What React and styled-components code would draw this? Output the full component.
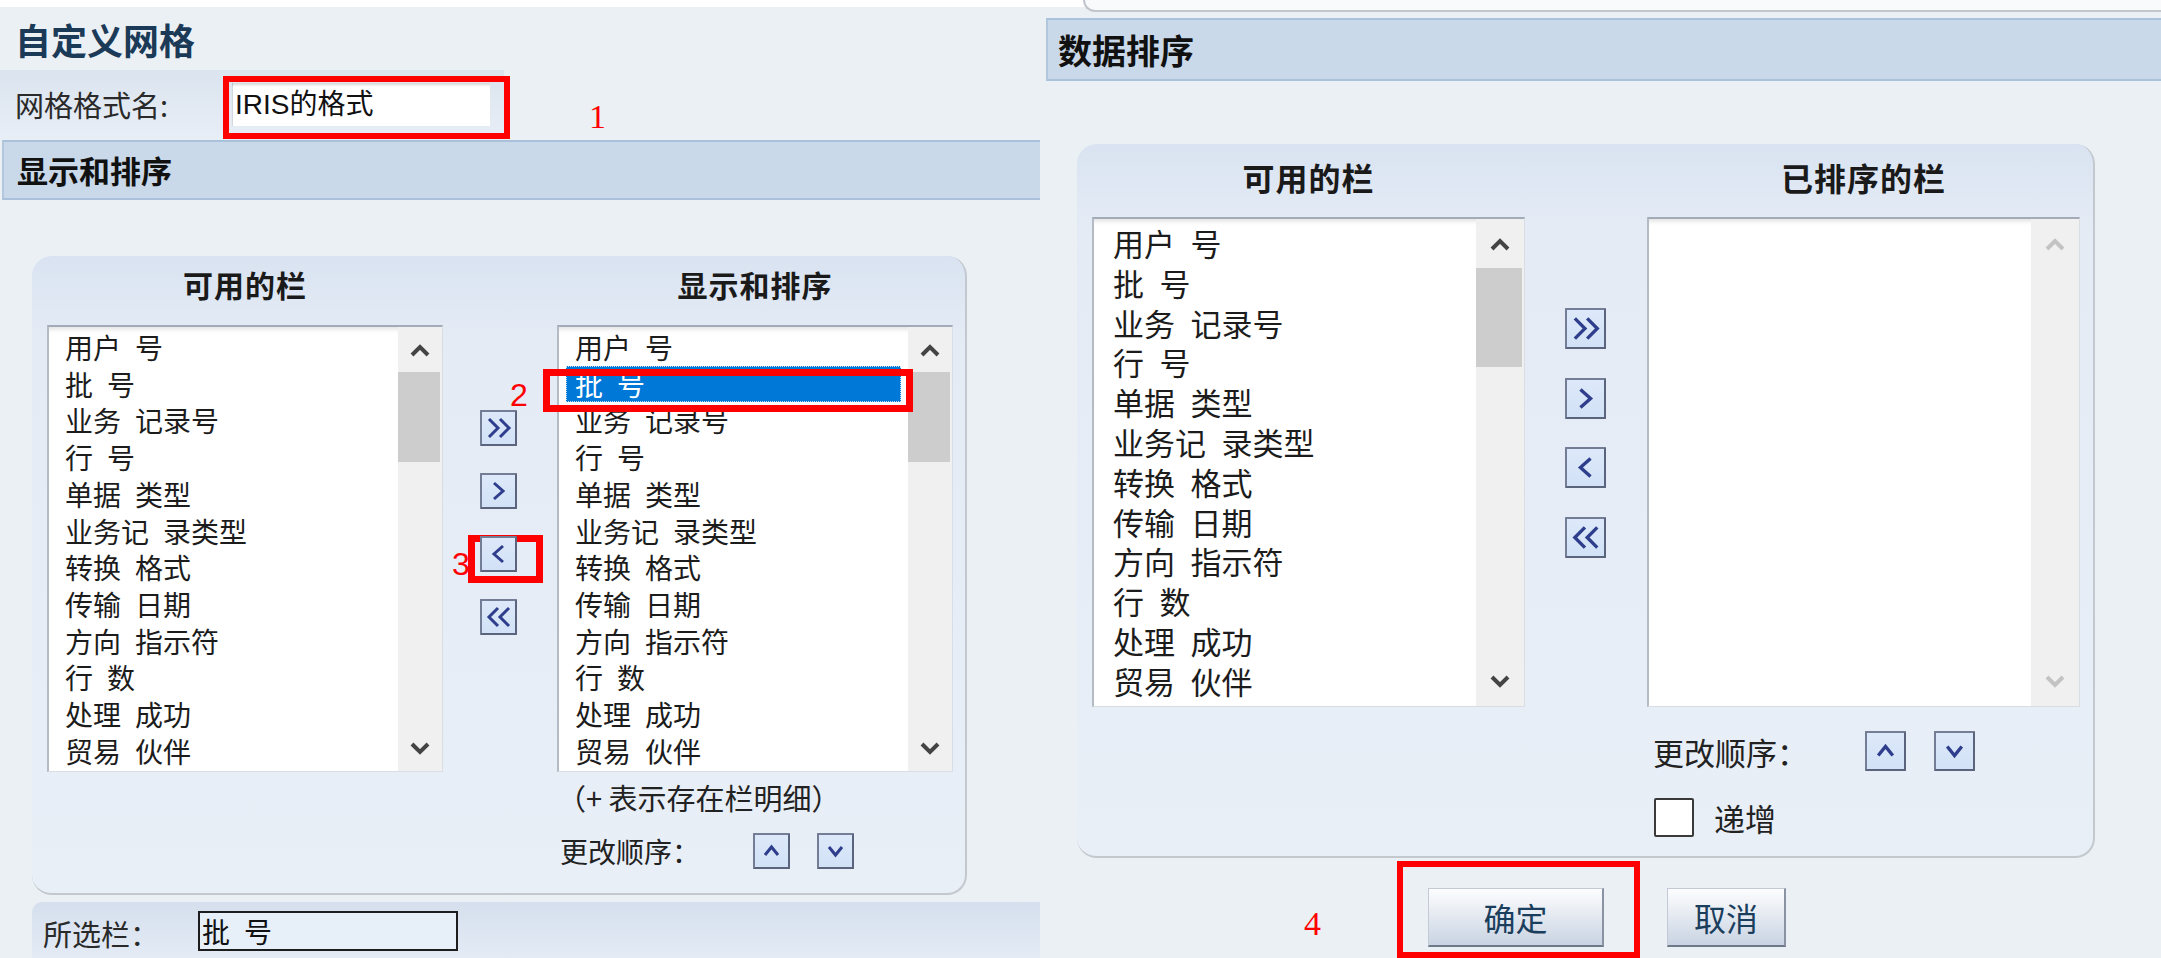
import React from 'react';
import styled, { createGlobalStyle, css } from 'styled-components';

const CJK = '"Noto Sans CJK SC", "Noto Sans CJK JP", sans-serif';
const MIXED = '"Liberation Sans", "Noto Sans CJK SC", sans-serif';

const GlobalStyle = createGlobalStyle`
  *, *::before, *::after { box-sizing: border-box; }
  html, body { margin: 0; padding: 0; background: #ebf0f5; }
  body { font-family: ${CJK}; color: #222; }
`;

const ITEMS = ['用户 号', '批 号', '业务 记录号', '行 号', '单据 类型', '业务记 录类型', '转换 格式', '传输 日期', '方向 指示符', '行 数', '处理 成功', '贸易 伙伴'];

const SIZES = {
  sm: { w: 396, h: 447, fs: 28, lh: 36.7, pt: 2, pl: 9, sb: 44, thumb: 90 },
  lg: { w: 433, h: 490, fs: 31, lh: 39.8, pt: 4, pl: 12, sb: 48, thumb: 99 },
};

/* ---------- page frame ---------- */
const Page = styled.div`
  display: flex;
  width: 2161px;
  height: 958px;
  overflow: hidden;
  background: #ebf0f5;
`;

const Pane = styled.section`
  display: flex;
  flex-direction: column;
  flex: none;
  width: ${p => p.$w}px;
  height: 100%;
`;

const WhiteStrip = styled.div`
  flex: none;
  height: 7px;
  background: #fff;
`;

const Title = styled.h1`
  margin: 0;
  flex: none;
  height: 63px;
  padding: 6px 0 0 15px;
  font-size: 36px;
  line-height: 52px;
  font-weight: 700;
  color: #1b3a57;
`;

const FormatRow = styled.div`
  flex: none;
  display: flex;
  align-items: flex-start;
  height: 70px;
  background: linear-gradient(180deg, #dbe4ef, #e8eef6) no-repeat;
  background-size: 504px 100%;
`;

const FieldLabel = styled.span`
  flex: none;
  width: ${p => p.$w}px;
  padding-left: ${p => p.$pl}px;
  font-size: 29px;
  line-height: ${p => p.$lh}px;
  color: #2a2a2a;
`;

const RedFrame = styled.div`
  flex: none;
  border: ${p => p.$t || 6}px solid #ff0000;
`;

const NameFrame = styled(RedFrame)`
  margin-top: 6px;
  padding: 1px 14px 7px 3px;
`;

const TextBox = styled.div`
  width: 258px;
  height: 43px;
  background: #fff;
  box-shadow: inset 0 4px 3px -2px rgba(0, 0, 0, 0.16), inset 1px 0 0 #d3d9e1;
  font-family: ${MIXED};
  font-size: 28px;
  line-height: 43px;
  padding-left: 3px;
  color: #111;
  white-space: nowrap;
`;

const Mark = styled.span`
  flex: none;
  font-family: ${p => (p.$serif ? '"Liberation Serif", serif' : '"Liberation Sans", sans-serif')};
  color: #ff0000;
  font-size: ${p => p.$size || 34}px;
  line-height: 1;
`;

const Mark1 = styled(Mark)`
  margin: 30px 0 0 79px;
`;

/* red numbers and frames laid over the dialog (annotations) */
const FloatMark = styled(Mark)`
  position: absolute;
  left: ${p => p.$x}px;
  top: ${p => p.$y}px;
  z-index: 3;
  pointer-events: none;
`;

const FloatFrame = styled.div`
  position: absolute;
  left: ${p => p.$x}px;
  top: ${p => p.$y}px;
  width: ${p => p.$w}px;
  height: ${p => p.$h}px;
  border: 7px solid #ff0000;
  z-index: ${p => p.$z};
  pointer-events: none;
`;

const SectionHeader = styled.div`
  flex: none;
  height: ${p => p.$h}px;
  margin-left: ${p => p.$ml}px;
  background: #c9d9e9;
  border-top: 2px solid #a9c1da;
  border-bottom: 2px solid #a9c1da;
  border-left: 2px solid #b3c7dc;
  padding-left: ${p => p.$pl}px;
  font-size: ${p => p.$fs}px;
  line-height: ${p => p.$h - 4}px;
  font-weight: 700;
  color: #111;
`;

/* ---------- rounded dialog panel ---------- */
const Panel = styled.div`
  flex: none;
  display: flex;
  flex-direction: column;
  width: ${p => p.$w}px;
  height: ${p => p.$h}px;
  margin: ${p => p.$mt}px 0 0 ${p => p.$ml}px;
  padding-left: 15px;
  border-radius: 20px;
  background: linear-gradient(180deg, #d9e3f1 0px, #e4ebf5 80px, #e9eff7 100%);
  border-right: 2px solid #c3c8ce;
  border-bottom: 2px solid #c3c8ce;
`;

const HeadRow = styled.div`
  display: grid;
  grid-template-columns: ${p => p.$cols};
  height: ${p => p.$h}px;
  padding-top: ${p => p.$pt}px;
`;

const ColHead = styled.div`
  text-align: center;
  font-size: ${p => p.$fs}px;
  line-height: 40px;
  font-weight: 700;
  letter-spacing: 1px;
  color: #1a1a1a;
`;

const Body = styled.div`
  position: relative;
  display: flex;
  align-items: flex-start;
`;

const Column = styled.div`
  display: flex;
  flex-direction: column;
`;

const ButtonCol = styled.div`
  flex: none;
  display: flex;
  flex-direction: column;
  width: ${p => p.$w}px;
  padding-left: ${p => p.$pl}px;
  padding-top: ${p => p.$pt}px;
  gap: ${p => p.$gap}px;
`;

const IconButton = styled.button`
  position: relative;
  z-index: 1;
  flex: none;
  width: ${p => p.$w}px;
  height: ${p => p.$h}px;
  padding: 0;
  margin: 0;
  display: flex;
  align-items: center;
  justify-content: center;
  background: linear-gradient(180deg, #dde9fa, #d2e1f6);
  border: 2px solid #737e96;
  border-right-color: #5a647c;
  border-bottom-color: #5a647c;
  border-radius: 1px;
  cursor: pointer;
  svg { display: block; width: 100%; height: 100%; }
`;

/* ---------- list box ---------- */
const ListFrame = styled.div`
  flex: none;
  display: flex;
  width: ${p => p.$w}px;
  height: ${p => p.$h}px;
  background: #fff;
  border-top: 2px solid #a2abb7;
  border-left: 2px solid #b3bbc5;
  border-right: 1px solid #d9dee4;
  border-bottom: 1px solid #d9dee4;
  overflow: hidden;
`;

const ListItems = styled.div`
  flex: 1;
  min-width: 0;
  padding-top: ${p => p.$pt}px;
  box-shadow: inset 0 6px 5px -4px rgba(0, 0, 0, 0.13);
  font-size: ${p => p.$fs}px;
  line-height: ${p => p.$lh}px;
  word-spacing: 0.28em;
  color: #1c1c1c;
  overflow: hidden;
`;

const Item = styled.div`
  margin: 0 7px;
  padding-left: ${p => p.$pl}px;
  white-space: nowrap;
  ${p => p.$selected && css`
    background: #0078d7;
    color: #fff;
    outline: 1px dotted #bfe0ff;
    outline-offset: -1px;
  `}
`;

const Track = styled.div`
  flex: none;
  display: flex;
  flex-direction: column;
  width: ${p => p.$w}px;
  background: #f0f0f0;
`;

const ArrowCell = styled.div`
  flex: none;
  height: ${p => p.$h}px;
  display: flex;
  align-items: center;
  justify-content: center;
`;

const Thumb = styled.div`
  flex: none;
  height: ${p => p.$h}px;
  margin-right: 2px;
  background: #cdcdcd;
`;

const TrackFill = styled.div`
  flex: 1;
`;

const ScrollChevron = ({ dir, muted }) => (
  <svg width="22" height="14" viewBox="0 0 22 14">
    <polyline
      points={dir === 'up' ? '3,12 11,4 19,12' : '3,2 11,10 19,2'}
      fill="none"
      stroke={muted ? '#c3c3c3' : '#444'}
      strokeWidth="4"
    />
  </svg>
);

function ListBox({ size, items = [], selected = -1, showThumb, muted }) {
  const s = SIZES[size];
  return (
    <ListFrame $w={s.w} $h={s.h}>
      <ListItems $fs={s.fs} $lh={s.lh} $pt={s.pt}>
        {items.map((t, i) => (
          <Item key={t} $pl={s.pl} $selected={i === selected}>{t}</Item>
        ))}
      </ListItems>
      <Track $w={s.sb}>
        <ArrowCell $h={s.sb + 1}><ScrollChevron dir="up" muted={muted} /></ArrowCell>
        {showThumb && <Thumb $h={s.thumb} />}
        <TrackFill />
        <ArrowCell $h={s.sb}><ScrollChevron dir="down" muted={muted} /></ArrowCell>
      </Track>
    </ListFrame>
  );
}

const MOVE_PATHS = {
  allRight: ['7,7 16,16 7,25', '18,7 27,16 18,25'],
  right: ['12,8 21,16 12,24'],
  left: ['21,8 12,16 21,24'],
  allLeft: ['16,7 7,16 16,25', '27,7 18,16 27,25'],
  up: ['10,20 16.5,12 23,20'],
  down: ['10,12 16.5,20 23,12'],
};

const ChevronIcon = ({ kind }) => (
  <svg viewBox="0 0 33 32">
    {MOVE_PATHS[kind].map(pts => (
      <polyline key={pts} points={pts} fill="none" stroke="#2f3e8c" strokeWidth="3" />
    ))}
  </svg>
);

function MoveButtons({ w, pl, pt, gap, bw, bh }) {
  return (
    <ButtonCol $w={w} $pl={pl} $pt={pt} $gap={gap}>
      {['allRight', 'right', 'left', 'allLeft'].map(k => (
        <IconButton key={k} $w={bw} $h={bh} aria-label={k}><ChevronIcon kind={k} /></IconButton>
      ))}
    </ButtonCol>
  );
}

const Note = styled.div`
  margin-top: 7px;
  font-size: 29px;
  line-height: 36px;
  color: #222;
  white-space: nowrap;
`;

const OrderRow = styled.div`
  display: flex;
  align-items: center;
  margin-top: ${p => p.$mt}px;
  height: ${p => p.$h}px;
  padding-left: ${p => p.$pl}px;
  gap: ${p => p.$gap}px;
`;

const OrderLabel = styled.span`
  flex: none;
  width: ${p => p.$w}px;
  font-size: ${p => p.$fs}px;
  color: #222;
  white-space: nowrap;
`;

const CheckRow = styled.label`
  display: flex;
  align-items: center;
  gap: 20px;
  margin-top: 27px;
  height: 39px;
  padding-left: 7px;
  font-size: 31px;
  color: #222;
`;

const CheckBox = styled.span`
  flex: none;
  width: 40px;
  height: 39px;
  background: #fff;
  border: 2px solid #3a3a3a;
  border-radius: 2px;
`;

const SelectedBar = styled.div`
  flex: 1;
  display: flex;
  align-items: flex-start;
  margin: 7px 0 0 32px;
  background: linear-gradient(180deg, #d5dfed, #e5ecf6);
  border-top-left-radius: 10px;
`;

const SelInput = styled.div`
  flex: none;
  margin-top: 9px;
  width: 260px;
  height: 40px;
  background: #e7eff9;
  border: 2px solid #1d1d1d;
  font-size: 28px;
  line-height: 36px;
  padding-left: 2px;
  word-spacing: 0.28em;
  color: #111;
`;

/* ---------- right dialog ---------- */
const TopArea = styled.div`
  flex: none;
  height: 18px;
  background: linear-gradient(180deg, #fff 0 7px, transparent 7px);
`;

const PrevPanelEdge = styled.div`
  height: 12px;
  margin-left: 43px;
  background: #f8fafc;
  border-left: 2px solid #c2c6cc;
  border-bottom: 2px solid #c2c6cc;
  border-bottom-left-radius: 14px;
`;

const Footer = styled.div`
  flex: none;
  display: flex;
  align-items: flex-start;
  margin-top: 3px;
  padding-left: 264px;
`;

const Mark4 = styled(Mark)`
  margin-top: 46px;
`;

const OkFrame = styled(RedFrame)`
  margin-left: 76px;
  padding: 21px 30px 5px 25px;
`;

const DialogButton = styled.button`
  flex: none;
  width: ${p => p.$w}px;
  height: 59px;
  margin: ${p => p.$m || 0};
  padding: 0;
  background: linear-gradient(180deg, #fdfdfe 0%, #e6ebf2 45%, #c9d3e2 100%);
  border: 1px solid #c3cad5;
  border-right: 2px solid #8a93a2;
  border-bottom: 2px solid #6f7888;
  font-family: ${CJK};
  font-size: 32px;
  color: #1b3e5d;
  cursor: pointer;
`;

export default function App() {
  return (
    <>
      <GlobalStyle />
      <Page>
        <Pane $w={1040}>
          <WhiteStrip />
          <Title>自定义网格</Title>
          <FormatRow>
            <FieldLabel $w={223} $pl={15} $lh={68}>网格格式名:</FieldLabel>
            <NameFrame>
              <TextBox>IRIS的格式</TextBox>
            </NameFrame>
            <Mark1 $serif $size={34}>1</Mark1>
          </FormatRow>
          <SectionHeader $h={60} $ml={2} $pl={13} $fs={31}>显示和排序</SectionHeader>

          <Panel $w={935} $h={639} $mt={56} $ml={32}>
            <HeadRow $cols="396px 114px 396px" $h={69} $pt={8}>
              <ColHead $fs={30}>可用的栏</ColHead>
              <span />
              <ColHead $fs={30}>显示和排序</ColHead>
            </HeadRow>
            <Body>
              <ListBox size="sm" items={ITEMS} showThumb />
              <MoveButtons w={114} pl={37} pt={85} gap={27} bw={37} bh={36} />
              <Column>
                <ListBox size="sm" items={ITEMS} selected={1} showThumb />
                <Note>（+ 表示存在栏明细）</Note>
                <OrderRow $mt={18} $h={36} $pl={3} $gap={27}>
                  <OrderLabel $w={166} $fs={28}>更改顺序：</OrderLabel>
                  <IconButton $w={37} $h={36} aria-label="up"><ChevronIcon kind="up" /></IconButton>
                  <IconButton $w={37} $h={36} aria-label="down"><ChevronIcon kind="down" /></IconButton>
                </OrderRow>
              </Column>

              <FloatFrame $x={496} $y={44} $w={370} $h={43} $z={2} />
              <FloatMark $x={463} $y={54} $size={32}>2</FloatMark>
              <FloatFrame $x={421} $y={210} $w={75} $h={48} $z={0} />
              <FloatMark $x={405} $y={223} $size={32}>3</FloatMark>
            </Body>
          </Panel>

          <SelectedBar>
            <FieldLabel $w={166} $pl={11} $lh={62}>所选栏：</FieldLabel>
            <SelInput>批 号</SelInput>
          </SelectedBar>
        </Pane>

        <Pane $w={1121}>
          <TopArea>
            <PrevPanelEdge />
          </TopArea>
          <SectionHeader $h={63} $ml={6} $pl={10} $fs={34}>数据排序</SectionHeader>

          <Panel $w={1018} $h={714} $mt={63} $ml={37}>
            <HeadRow $cols="433px 122px 433px" $h={73} $pt={13}>
              <ColHead $fs={32}>可用的栏</ColHead>
              <span />
              <ColHead $fs={32}>已排序的栏</ColHead>
            </HeadRow>
            <Body>
              <ListBox size="lg" items={ITEMS} showThumb />
              <MoveButtons w={122} pl={40} pt={91} gap={28.5} bw={41} bh={41} />
              <Column>
                <ListBox size="lg" muted />
                <OrderRow $mt={24} $h={40} $pl={6} $gap={28}>
                  <OrderLabel $w={184} $fs={31}>更改顺序：</OrderLabel>
                  <IconButton $w={41} $h={40} aria-label="up"><ChevronIcon kind="up" /></IconButton>
                  <IconButton $w={41} $h={40} aria-label="down"><ChevronIcon kind="down" /></IconButton>
                </OrderRow>
                <CheckRow>
                  <CheckBox />
                  递增
                </CheckRow>
              </Column>
            </Body>
          </Panel>

          <Footer>
            <Mark4 $serif $size={34}>4</Mark4>
            <OkFrame>
              <DialogButton $w={176}>确定</DialogButton>
            </OkFrame>
            <DialogButton $w={119} $m="27px 0 0 27px">取消</DialogButton>
          </Footer>
        </Pane>
      </Page>
    </>
  );
}
